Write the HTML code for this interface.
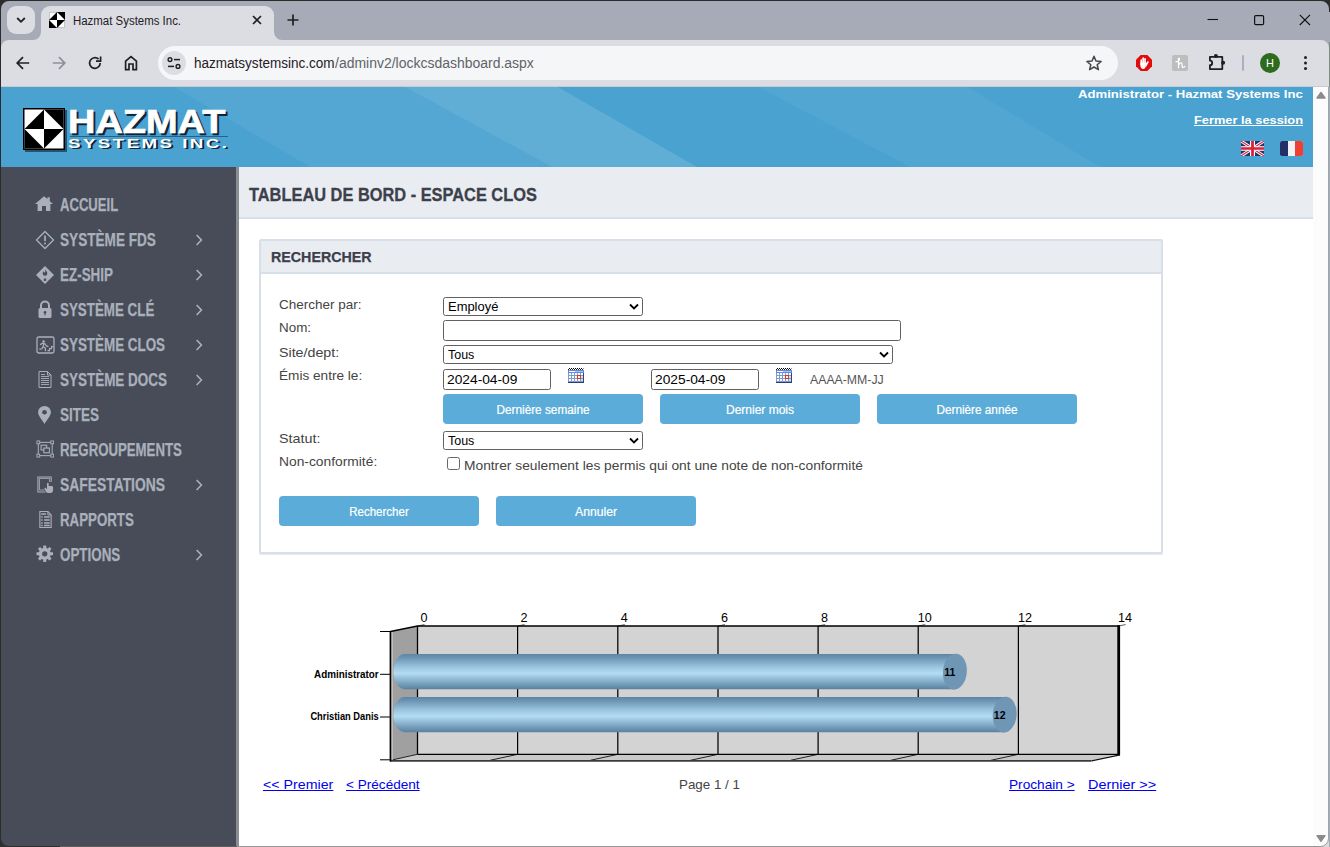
<!DOCTYPE html>
<html lang="fr">
<head>
<meta charset="utf-8">
<title>Hazmat Systems Inc.</title>
<style>
*{box-sizing:border-box;margin:0;padding:0}
html,body{width:1330px;height:847px;overflow:hidden;background:#fff;font-family:"Liberation Sans",sans-serif}
.abs{position:absolute}
#win{position:absolute;left:0;top:0;width:1330px;height:847px;overflow:hidden;background:#a7aab7}
.t{position:absolute;white-space:nowrap;transform-origin:0 50%;line-height:1}
/* ---------- browser chrome ---------- */
#tabstrip{position:absolute;left:0;top:0;width:1330px;height:40px;background:#a7aab7}
#toolbar{position:absolute;left:1px;top:40px;width:1328px;height:46px;background:#dcdde2;border-radius:8px 8px 0 0}
#tabsearch{position:absolute;left:7px;top:6px;width:28px;height:28px;border-radius:9px;background:#dcdde2}
#tab{position:absolute;left:41px;top:6px;width:233px;height:34px;background:#dcdde2;border-radius:9px 9px 0 0}
#urlbar{position:absolute;left:158px;top:46px;width:960px;height:34px;border-radius:17px;background:#f5f6f8}
#sitebtn{position:absolute;left:162px;top:51px;width:24px;height:24px;border-radius:12px;background:#dcdde2}
/* ---------- page ---------- */
#page{position:absolute;left:1px;top:87px;width:1327px;height:759px;background:#fff;overflow:hidden}
#hdr{position:absolute;left:0;top:0;width:1312px;height:80px;background:#4aa2d0;overflow:hidden}
#side{position:absolute;left:0;top:80px;width:235px;height:679px;background:#474c58}
#sideb{position:absolute;left:235px;top:80px;width:3px;height:679px;background:#8a8d94}
#titleband{position:absolute;left:238px;top:80px;width:1074px;height:52px;background:#e9edf2;border-bottom:2px solid #d9dfe8}
#panel{position:absolute;left:258px;top:152px;width:904px;height:315px;border:2px solid #d9dfe8;border-radius:2px;background:#fff;box-shadow:0 1px 0 #e6e9ef}
#panelh{position:absolute;left:0;top:0;width:900px;height:33px;background:#e9edf2;border-bottom:2px solid #d9dfe8}
#scroll{position:absolute;left:1312px;top:0;width:15px;height:759px;background:#fcfcfc}
.mi{position:absolute;left:0;width:235px;height:35px}
.mt{color:#aab0bb;font-weight:bold;font-size:18px;left:58.900px}
.lbl{color:#444;font-size:13px}
.btn{position:absolute;width:200px;height:30px;border-radius:4px;background:#5bacd8}
.btn span{position:absolute;white-space:nowrap;line-height:1;left:100px;top:9.700px;color:#fff;font-size:12px;-webkit-text-stroke:.2px #fff;transform-origin:50% 50%;transform:translateX(-50%)}
.sel{position:absolute;height:19px;border:1px solid #616161;border-radius:2.500px;background:#fff}
.inp{position:absolute;height:21px;border:1px solid #616161;border-radius:2.500px;background:#fff}
.lnk{color:#0000ee;text-decoration:underline;font-size:13px}
</style>
</head>
<body>
<div id="win">
  <div id="tabstrip"></div>
  <div id="toolbar"></div>
  <div id="tabsearch"></div>
  <div id="tab"></div>
  <div id="urlbar"></div>
  <div id="sitebtn"></div>

  <!-- tab search chevron -->
  <svg class="abs" style="left:15px;top:15px" width="12" height="10" viewBox="0 0 12 10"><path d="M2.2 3 6 6.8 9.8 3" fill="none" stroke="#1f2023" stroke-width="1.8"/></svg>
  <!-- tab curves -->
  <svg class="abs" style="left:33px;top:32px" width="8" height="8" viewBox="0 0 8 8"><path d="M0 8H8V0A8 8 0 0 1 0 8Z" fill="#dcdde2"/></svg>
  <svg class="abs" style="left:274px;top:32px" width="8" height="8" viewBox="0 0 8 8"><path d="M8 8H0V0A8 8 0 0 0 8 8Z" fill="#dcdde2"/></svg>
  <!-- favicon -->
  <svg class="abs" style="left:49px;top:12px" width="16" height="16" viewBox="0 0 16 16"><rect width="16" height="16" fill="#fff"/><rect x=".5" y=".5" width="15" height="15" fill="none" stroke="#c4c4c4" stroke-width="1"/><path d="M8 0H16V8Z M0 8V16H8Z M8 0V8H0Z M8 16V8H16Z" fill="#000"/></svg>
  <span class="t" id="tabtitle" style="left:73px;top:15px;font-size:12px;color:#1f2023;transform:scaleX(.953)">Hazmat Systems Inc.</span>
  <svg class="abs" style="left:251px;top:14px" width="12" height="12" viewBox="0 0 12 12"><path d="M2 2 10 10M10 2 2 10" stroke="#1f2023" stroke-width="1.6"/></svg>
  <svg class="abs" style="left:286px;top:13px" width="14" height="14" viewBox="0 0 14 14"><path d="M7 1.5V12.5M1.5 7H12.5" stroke="#1f2023" stroke-width="1.7"/></svg>
  <!-- window controls -->
  <svg class="abs" style="left:1207px;top:13px" width="12" height="12" viewBox="0 0 12 12"><path d="M0.5 6.5H11" stroke="#111" stroke-width="1.1"/></svg>
  <svg class="abs" style="left:1253px;top:14px" width="12" height="12" viewBox="0 0 12 12"><rect x="1.600" y="1.700" width="9" height="9" rx="1.200" fill="none" stroke="#111" stroke-width="1.200"/></svg>
  <svg class="abs" style="left:1299px;top:14px" width="12" height="12" viewBox="0 0 12 12"><path d="M0.8 0.8 11 11M11 0.8 0.8 11" stroke="#111" stroke-width="1.1"/></svg>
  <!-- nav icons -->
  <svg class="abs" style="left:15px;top:55px" width="16" height="16" viewBox="0 0 16 16"><path d="M14.2 8H2.6M8 2.2 2.2 8 8 13.8" fill="none" stroke="#1f2023" stroke-width="1.7"/></svg>
  <svg class="abs" style="left:51px;top:55px" width="16" height="16" viewBox="0 0 16 16"><path d="M1.8 8H13.4M8 2.2 13.8 8 8 13.8" fill="none" stroke="#8e9099" stroke-width="1.7"/></svg>
  <svg class="abs" style="left:87px;top:55px" width="16" height="16" viewBox="0 0 16 16"><path d="M13.2 8A5.3 5.3 0 1 1 11.6 4.2" fill="none" stroke="#1f2023" stroke-width="1.7"/><path d="M13.6 1.6V6.2H9" fill="none" stroke="#1f2023" stroke-width="1.7"/></svg>
  <svg class="abs" style="left:123px;top:54px" width="16" height="17" viewBox="0 0 16 17"><path d="M2.6 15.6V7.2L8 2.6 13.4 7.2V15.6H10V10H6V15.6Z" fill="none" stroke="#1f2023" stroke-width="1.7"/></svg>
  <!-- site settings icon -->
  <svg class="abs" style="left:166px;top:55px" width="16" height="16" viewBox="0 0 16 16"><circle cx="4" cy="4.6" r="1.9" fill="none" stroke="#1f2023" stroke-width="1.4"/><path d="M8 4.6H14" stroke="#1f2023" stroke-width="1.5"/><circle cx="12" cy="11.4" r="1.9" fill="none" stroke="#1f2023" stroke-width="1.4"/><path d="M2 11.4H8" stroke="#1f2023" stroke-width="1.5"/></svg>
  <span class="t" id="url1" style="left:194px;top:56px;font-size:14px;color:#1f2023;transform:scaleX(.966)">hazmatsystemsinc.com</span>
  <span class="t" id="url2" style="left:335px;top:56px;font-size:14px;color:#5f6368;transform:scaleX(.998)">/adminv2/lockcsdashboard.aspx</span>
  <!-- star -->
  <svg class="abs" style="left:1085px;top:54px" width="18" height="18" viewBox="0 0 18 18"><path d="M9 2.2 11 7l5.1.4-3.9 3.3 1.2 5L9 13l-4.4 2.7 1.2-5L1.9 7.400 7 7Z" fill="none" stroke="#45474d" stroke-width="1.5" stroke-linejoin="round"/></svg>
  <!-- adblock -->
  <svg class="abs" style="left:1135px;top:54px" width="18" height="18" viewBox="0 0 18 18"><path d="M5.700 1H12.300L17 5.700V12.300L12.300 17H5.700L1 12.300V5.700Z" fill="#e20b0b"/><g fill="#fff"><rect x="5.400" y="5.200" width="1.700" height="6" rx=".85"/><rect x="7.300" y="3.300" width="1.700" height="7" rx=".85"/><rect x="9.200" y="4" width="1.700" height="7" rx=".85"/><path d="M5.400 8.500H10.900V11.500C10.900 13.600 9.700 14.900 8.200 14.900 6.600 14.900 5.400 13.600 5.400 11.500Z"/><path d="M10.400 10.300 12.300 7.500a.8.800 0 0 1 1.350.85L11.300 12.800Z"/></g></svg>
  <!-- grey ext -->
  <svg class="abs" style="left:1172px;top:55px" width="16" height="16" viewBox="0 0 16 16"><rect width="16" height="16" rx="2" fill="#bdbdbd"/><path d="M4 6.700C5.600 6.700 7.700 5.700 7.500 3.700 7.300 2.600 6.200 3 6.400 5L6.600 12.800M6.700 9.800C7.400 7.600 9.800 7 10 9L10.200 11.500C10.300 12.800 11.600 12.800 12.700 11.300" fill="none" stroke="#fff" stroke-width="1.250" stroke-linecap="round" stroke-linejoin="round"/></svg>
  <!-- puzzle -->
  <svg class="abs" style="left:1207px;top:53px" width="20" height="20" viewBox="0 0 20 20"><path d="M2.900 3.900H15.300V16.100H2.900V12.200A2.300 2.300 0 0 0 2.900 7.600Z" fill="none" stroke="#1f2023" stroke-width="1.800" stroke-linejoin="round"/><circle cx="8.900" cy="3.100" r="2" fill="#1f2023"/><circle cx="16.100" cy="9.800" r="2" fill="#1f2023"/></svg>
  <div class="abs" style="left:1242px;top:55px;width:2px;height:16px;border-radius:1px;background:#a9b0c3"></div>
  <div class="abs" style="left:1260px;top:53px;width:20px;height:20px;border-radius:10px;background:#2d6b1f"></div>
  <span class="t" style="left:1266px;top:58px;font-size:11px;color:#fff">H</span>
  <div class="abs" style="left:1304.400px;top:56px;width:3px;height:3px;border-radius:2px;background:#1f2023;box-shadow:0 5.500px 0 #1f2023,0 11px 0 #1f2023"></div>
  <div class="abs" style="left:1px;top:86px;width:1328px;height:1px;background:#c9cacf"></div>

  <div id="page">
    <div id="hdr">
      <svg class="abs" style="left:0;top:0" width="1312" height="80" viewBox="0 0 1312 80">
        <polygon points="173,0 404,0 551,80 309,80" fill="#fff" fill-opacity=".055"/>
        <polygon points="404,0 557,0 696,80 551,80" fill="#fff" fill-opacity=".12"/>
        <polygon points="757,0 967,0 1099,80 909,80" fill="#fff" fill-opacity=".045"/>
      </svg>
      <!-- logo -->
      <svg class="abs" style="left:20px;top:19px" width="50" height="50" viewBox="0 0 50 50">
        <rect x="4" y="4" width="42" height="42" fill="#0b1220" fill-opacity=".55"/>
        <rect x="2" y="2" width="42" height="42" fill="#000"/>
        <g transform="translate(3.500 3.500)">
          <rect width="39" height="39" fill="#fff"/>
          <path d="M19.500 0H39V19.500Z M0 19.500V39H19.500Z M19.500 0V19.500H0Z M19.500 39V19.500H39Z" fill="#000"/>
        </g>
      </svg>
      <span class="t" id="lg1s" style="left:69px;top:20px;font-size:33px;font-weight:bold;color:#0e2238;-webkit-text-stroke:.7px #0e2238;transform:scaleX(1.15)">HAZMAT</span>
      <span class="t" id="lg1" style="left:67px;top:18px;font-size:33px;font-weight:bold;color:#fff;-webkit-text-stroke:.7px #fff;transform:scaleX(1.15)">HAZMAT</span>
      <div class="abs" style="left:69px;top:49px;width:158px;height:1px;background:#2c5f86"></div>
      <span class="t" id="lg2s" style="left:68.600px;top:52px;font-size:12px;font-weight:bold;color:#0e2238;letter-spacing:1.54px;transform:scaleX(1.564)">SYSTEMS INC.</span>
      <span class="t" id="lg2" style="left:67.100px;top:50.500px;font-size:12px;font-weight:bold;color:#fff;letter-spacing:1.54px;transform:scaleX(1.564)">SYSTEMS INC.</span>
      <!-- right -->
      <span class="t" id="h1" style="left:1077px;top:1.500px;font-size:11.500px;font-weight:bold;color:#fff;transform:scaleX(1.142)">Administrator - Hazmat Systems Inc</span>
      <span class="t" id="h2" style="left:1193px;top:27.500px;font-size:11.500px;font-weight:bold;color:#fff;transform:scaleX(1.1146)">Fermer la session</span>
      <div class="abs" style="left:1193px;top:38px;width:109px;height:1px;background:#fff"></div>
      <!-- UK flag -->
      <svg class="abs" style="left:1240px;top:54px" width="23" height="15" viewBox="0 0 23 16" preserveAspectRatio="none">
        <rect width="23" height="16" rx="1.5" fill="#27346b"/>
        <path d="M0 0 23 16M23 0 0 16" stroke="#fff" stroke-width="3.200"/>
        <path d="M0 0 23 16M23 0 0 16" stroke="#d8243a" stroke-width="1.100"/>
        <path d="M11.500 0V16M0 8H23" stroke="#fff" stroke-width="5"/>
        <path d="M11.500 0V16M0 8H23" stroke="#d8243a" stroke-width="2.800"/>
      </svg>
      <!-- FR flag -->
      <svg class="abs" style="left:1279px;top:54px" width="23" height="15" viewBox="0 0 23 16" preserveAspectRatio="none">
        <rect width="23" height="16" rx="2" fill="#f3f3f6"/>
        <path d="M2 0H8V16H2a2 2 0 0 1-2-2V2a2 2 0 0 1 2-2Z" fill="#232f68"/>
        <path d="M15 0H21a2 2 0 0 1 2 2V14a2 2 0 0 1-2 2H15Z" fill="#ee4033"/>
      </svg>
    </div>
    <div id="side">
      <div class="mi" style="top:20px"><svg class="abs" style="left:33.300px;top:8.300px" width="20" height="17" viewBox="0 0 20 17"><path d="M10 1.200 1 9h2.600V16H8V11h4v5h4.400V9H19L15.800 6.200V2.200H13.400V4.100Z" fill="#aab0bb"/></svg><span class="t mt" id="m0" style="top:9.200px;-webkit-text-stroke:.25px #aab0bb;transform:scaleX(0.7275)">ACCUEIL</span></div>
      <div class="mi" style="top:55px"><svg class="abs" style="left:34px;top:8px" width="20" height="20" viewBox="0 0 20 20"><path d="M10 1.500 18.500 10 10 18.500 1.500 10Z" fill="none" stroke="#aab0bb" stroke-width="1.300"/><path d="M10 5.500V11.200" stroke="#aab0bb" stroke-width="1.700"/><circle cx="10" cy="13.600" r="1" fill="#aab0bb"/></svg><span class="t mt" id="m1" style="top:9.200px;-webkit-text-stroke:.25px #aab0bb;transform:scaleX(0.755)">SYSTÈME FDS</span><svg class="abs" style="left:194px;top:12px" width="8" height="12" viewBox="0 0 8 12"><path d="M1.600 1 6.400 6 1.600 11" fill="none" stroke="#aab0bb" stroke-width="1.600"/></svg></div>
      <div class="mi" style="top:90px"><svg class="abs" style="left:34px;top:8px" width="20" height="20" viewBox="0 0 20 20"><path d="M10 1 19 10 10 19 1 10Z" fill="#aab0bb"/><path d="M10 4.500c1.500 1.500 2.300 2.600 2.300 4a2.300 2.300 0 0 1-4.600 0c0-1 .5-1.700 1.100-2.300.1.900.5 1.300 1 1.300.6 0 .7-1 .2-3Z" fill="#474c58"/><rect x="8.800" y="13.500" width="2.400" height="2.400" fill="#474c58"/></svg><span class="t mt" id="m2" style="top:9.200px;-webkit-text-stroke:.25px #aab0bb;transform:scaleX(0.746)">EZ-SHIP</span><svg class="abs" style="left:194px;top:12px" width="8" height="12" viewBox="0 0 8 12"><path d="M1.600 1 6.400 6 1.600 11" fill="none" stroke="#aab0bb" stroke-width="1.600"/></svg></div>
      <div class="mi" style="top:125px"><svg class="abs" style="left:36px;top:8px" width="16" height="19" viewBox="0 0 16 19"><path d="M4 8V5.500a4 4 0 0 1 8 0V8" fill="none" stroke="#aab0bb" stroke-width="2"/><rect x="1.500" y="8" width="13" height="10" rx="1.500" fill="#aab0bb"/><circle cx="8" cy="12.200" r="1.300" fill="#474c58"/><rect x="7.400" y="12.500" width="1.200" height="2.800" fill="#474c58"/></svg><span class="t mt" id="m3" style="top:9.200px;-webkit-text-stroke:.25px #aab0bb;transform:scaleX(0.7425)">SYSTÈME CLÉ</span><svg class="abs" style="left:194px;top:12px" width="8" height="12" viewBox="0 0 8 12"><path d="M1.600 1 6.400 6 1.600 11" fill="none" stroke="#aab0bb" stroke-width="1.600"/></svg></div>
      <div class="mi" style="top:160px"><svg class="abs" style="left:35px;top:8.500px" width="19" height="18" viewBox="0 0 19 18"><rect x="1" y="1" width="17" height="16" rx="1.800" fill="none" stroke="#aab0bb" stroke-width="1.300"/><circle cx="7.600" cy="5.400" r="1.250" fill="#aab0bb"/><path d="M4.600 8.400 6.600 7.200 9 7.800l1.200 2 1.800.5M8 7.600 7 10.600l2.200 1.500.3 2.600M7 10.800 5.800 12.800 3.800 13.200" fill="none" stroke="#aab0bb" stroke-width="1.250" stroke-linecap="round" stroke-linejoin="round"/><path d="M11.500 14.600H13.500V12.600H15.500V10.600H17.200" fill="none" stroke="#aab0bb" stroke-width="1.100"/></svg><span class="t mt" id="m4" style="top:9.200px;-webkit-text-stroke:.25px #aab0bb;transform:scaleX(0.745)">SYSTÈME CLOS</span><svg class="abs" style="left:194px;top:12px" width="8" height="12" viewBox="0 0 8 12"><path d="M1.600 1 6.400 6 1.600 11" fill="none" stroke="#aab0bb" stroke-width="1.600"/></svg></div>
      <div class="mi" style="top:195px"><svg class="abs" style="left:36px;top:8px" width="16" height="19" viewBox="0 0 16 19"><path d="M2 1.500H10.500L14 5V17.500H2Z" fill="none" stroke="#aab0bb" stroke-width="1"/><path d="M10.500 1.500V5H14" fill="none" stroke="#aab0bb" stroke-width="1"/><path d="M4 6.500H12M4 8.500H12M4 10.500H12M4 12.500H12M4 14.500H12M4 4.500H8" stroke="#aab0bb" stroke-width=".9"/></svg><span class="t mt" id="m5" style="top:9.200px;-webkit-text-stroke:.25px #aab0bb;transform:scaleX(0.748)">SYSTÈME DOCS</span><svg class="abs" style="left:194px;top:12px" width="8" height="12" viewBox="0 0 8 12"><path d="M1.600 1 6.400 6 1.600 11" fill="none" stroke="#aab0bb" stroke-width="1.600"/></svg></div>
      <div class="mi" style="top:230px"><svg class="abs" style="left:36.200px;top:7.800px" width="15" height="20.500" viewBox="0 0 14 20" preserveAspectRatio="none"><path d="M7 1a6 6 0 0 0-6 6c0 3.600 4 7.600 6 11.500 2-3.900 6-7.900 6-11.500a6 6 0 0 0-6-6Z" fill="#aab0bb"/><circle cx="7" cy="7" r="2.200" fill="#474c58"/></svg><span class="t mt" id="m6" style="top:9.200px;-webkit-text-stroke:.25px #aab0bb;transform:scaleX(0.75)">SITES</span></div>
      <div class="mi" style="top:265px"><svg class="abs" style="left:34.500px;top:8.300px" width="18.500" height="18" viewBox="0 0 20 19" preserveAspectRatio="none"><rect x="2.500" y="2.500" width="15" height="14" fill="none" stroke="#aab0bb" stroke-width="1.100"/><g fill="#474c58" stroke="#aab0bb" stroke-width="1"><rect x="1" y="1" width="3" height="3"/><rect x="16" y="1" width="3" height="3"/><rect x="1" y="15" width="3" height="3"/><rect x="16" y="15" width="3" height="3"/></g><rect x="5.500" y="5.500" width="6" height="5" fill="none" stroke="#aab0bb" stroke-width="1.200"/><rect x="8.500" y="8.500" width="6" height="5" fill="#474c58" stroke="#aab0bb" stroke-width="1.200"/></svg><span class="t mt" id="m7" style="top:9.200px;-webkit-text-stroke:.25px #aab0bb;transform:scaleX(0.734)">REGROUPEMENTS</span></div>
      <div class="mi" style="top:300px"><svg class="abs" style="left:35px;top:8px" width="18" height="19" viewBox="0 0 19 19" preserveAspectRatio="none"><path d="M16 7V2H2V17H10" fill="none" stroke="#aab0bb" stroke-width="1.100"/><path d="M3.600 3.400H14.400V7M3.600 3.400V15H9" fill="none" stroke="#aab0bb" stroke-width=".9"/><path d="M11.600 8.600a.9.900 0 0 1 1.800 0V11h3.200a1.400 1.400 0 0 1 1.400 1.400V15a3 3 0 0 1-3 3H13a3 3 0 0 1-2.600-1.500L9 13.800c-.4-.8.600-1.500 1.300-.8l1.300 1.200Z" fill="#aab0bb"/></svg><span class="t mt" id="m8" style="top:9.200px;-webkit-text-stroke:.25px #aab0bb;transform:scaleX(0.77)">SAFESTATIONS</span><svg class="abs" style="left:194px;top:12px" width="8" height="12" viewBox="0 0 8 12"><path d="M1.600 1 6.400 6 1.600 11" fill="none" stroke="#aab0bb" stroke-width="1.600"/></svg></div>
      <div class="mi" style="top:335px"><svg class="abs" style="left:37px;top:8px" width="15" height="19" viewBox="0 0 16 19" preserveAspectRatio="none"><path d="M2 1.500H10.500L14 5V17.500H2Z" fill="none" stroke="#aab0bb" stroke-width="1.200"/><path d="M10.500 1.500V5H14" fill="none" stroke="#aab0bb" stroke-width="1"/><path d="M3.500 7H5M6.500 7H12.500M3.500 10H5M6.500 10H12.500M3.500 13H5M6.500 13H12.500M3.500 15.500H5M6.500 15.500H12.500M3.500 4H8.500" stroke="#aab0bb" stroke-width="1.400"/></svg><span class="t mt" id="m9" style="top:9.200px;-webkit-text-stroke:.25px #aab0bb;transform:scaleX(0.738)">RAPPORTS</span></div>
      <div class="mi" style="top:370px"><svg class="abs" style="left:34.500px;top:8px" width="17.500" height="17.500" viewBox="0 0 18 18"><g fill="#aab0bb"><circle cx="9" cy="9" r="6.200"/><rect x="7.400" y=".5" width="3.200" height="17" rx=".5" transform="rotate(0 9 9)"/><rect x="7.400" y=".5" width="3.200" height="17" rx=".5" transform="rotate(45 9 9)"/><rect x="7.400" y=".5" width="3.200" height="17" rx=".5" transform="rotate(90 9 9)"/><rect x="7.400" y=".5" width="3.200" height="17" rx=".5" transform="rotate(135 9 9)"/></g><circle cx="9" cy="9" r="2.700" fill="#474c58"/></svg><span class="t mt" id="m10" style="top:9.200px;-webkit-text-stroke:.25px #aab0bb;transform:scaleX(0.744)">OPTIONS</span><svg class="abs" style="left:194px;top:12px" width="8" height="12" viewBox="0 0 8 12"><path d="M1.600 1 6.400 6 1.600 11" fill="none" stroke="#aab0bb" stroke-width="1.600"/></svg></div>
    </div>
    <div id="sideb"></div>
    <div id="titleband"></div>
    <span class="t" id="ttl" style="left:247.500px;top:100px;font-size:17.500px;font-weight:bold;color:#3d3f4b;-webkit-text-stroke:.3px #3d3f4b;transform:scaleX(0.936)">TABLEAU DE BORD - ESPACE CLOS</span>
    <div id="panel"><div id="panelh"></div></div>
    <span class="t" id="ptl" style="left:269.500px;top:162px;font-size:15px;font-weight:bold;color:#3d3f4b;-webkit-text-stroke:.25px #3d3f4b;transform:scaleX(0.951)">RECHERCHER</span>
    <!-- form labels -->
    <span class="t lbl" id="l1" style="left:278px;top:211px;transform:scaleX(1.038)">Chercher par:</span>
    <span class="t lbl" id="l2" style="left:278px;top:234px;transform:scaleX(1.032)">Nom:</span>
    <span class="t lbl" id="l3" style="left:278px;top:259px;transform:scaleX(1.095)">Site/dept:</span>
    <span class="t lbl" id="l4" style="left:278px;top:282px;transform:scaleX(1.047)">Émis entre le:</span>
    <span class="t lbl" id="l5" style="left:278px;top:345px;transform:scaleX(1.104)">Statut:</span>
    <span class="t lbl" id="l6" style="left:278px;top:368px;transform:scaleX(1.062)">Non-conformité:</span>
    <!-- controls -->
    <div class="sel" style="left:442px;top:210px;width:200px"></div>
    <span class="t" id="s1" style="left:447px;top:213px;font-size:13px;color:#000;transform:scaleX(0.996)">Employé</span>
    <svg class="abs chev" style="left:627.800px;top:216px" width="10" height="8" viewBox="0 0 10 8"><path d="M1 1.500 5 5.500 9 1.500" fill="none" stroke="#000" stroke-width="1.800"/></svg>
    <div class="inp" style="left:442px;top:233px;width:458px"></div>
    <div class="sel" style="left:442px;top:258px;width:450px"></div>
    <span class="t" id="s2" style="left:447px;top:261px;font-size:13px;color:#000;transform:scaleX(0.96)">Tous</span>
    <svg class="abs chev" style="left:877.800px;top:264px" width="10" height="8" viewBox="0 0 10 8"><path d="M1 1.500 5 5.500 9 1.500" fill="none" stroke="#000" stroke-width="1.800"/></svg>
    <div class="inp" style="left:442px;top:282px;width:108px"></div>
    <span class="t" id="d1" style="left:446px;top:286px;font-size:13px;color:#000;transform:scaleX(1.059)">2024-04-09</span>
    <div class="inp" style="left:650px;top:282px;width:108px"></div>
    <span class="t" id="d2" style="left:654px;top:286px;font-size:13px;color:#000;transform:scaleX(1.059)">2025-04-09</span>
    <svg class="abs" style="left:567px;top:281px" width="16" height="15" viewBox="0 0 16 15" shape-rendering="crispEdges"><rect x="1" y="0" width="1" height="1" fill="#000"/><rect x="0" y="1" width="1" height="1" fill="#222"/><rect x="3" y="0" width="1" height="1" fill="#000"/><rect x="2" y="1" width="1" height="1" fill="#222"/><rect x="5" y="0" width="1" height="1" fill="#000"/><rect x="4" y="1" width="1" height="1" fill="#222"/><rect x="7" y="0" width="1" height="1" fill="#000"/><rect x="6" y="1" width="1" height="1" fill="#222"/><rect x="9" y="0" width="1" height="1" fill="#000"/><rect x="8" y="1" width="1" height="1" fill="#222"/><rect x="11" y="0" width="1" height="1" fill="#000"/><rect x="10" y="1" width="1" height="1" fill="#222"/><rect x="13" y="0" width="1" height="1" fill="#000"/><rect x="12" y="1" width="1" height="1" fill="#222"/><rect x="14" y="1" width="1" height="1" fill="#222"/><rect x="15" y="0" width="1" height="1" fill="#999"/><rect x="0" y="2" width="16" height="3" fill="#5c88e2"/><rect x="1" y="3" width="6" height="1" fill="#fff"/><rect x="7" y="3" width="8" height="1" fill="#a9c2f2"/><rect x="0" y="5" width="16" height="10" fill="#7f9acb"/><rect x="15" y="5" width="1" height="10" fill="#2c467c"/><rect x="0" y="14" width="16" height="1" fill="#27406f"/><rect x="1" y="5" width="2" height="2" fill="#fff"/><rect x="4" y="5" width="2" height="2" fill="#fff"/><rect x="7" y="5" width="2" height="2" fill="#fff"/><rect x="10" y="5" width="2" height="2" fill="#fff"/><rect x="13" y="5" width="2" height="2" fill="#fff"/><rect x="1" y="8" width="2" height="2" fill="#fff"/><rect x="4" y="8" width="2" height="2" fill="#fff"/><rect x="7" y="8" width="2" height="2" fill="#fff"/><rect x="10" y="8" width="2" height="2" fill="#eef6ff"/><rect x="13" y="8" width="2" height="2" fill="#d4e2f4"/><rect x="1" y="11" width="2" height="2" fill="#fff"/><rect x="4" y="11" width="2" height="2" fill="#fff"/><rect x="7" y="11" width="2" height="2" fill="#fff"/><rect x="10" y="11" width="2" height="2" fill="#eef6ff"/><rect x="13" y="11" width="2" height="2" fill="#d4e2f4"/><rect x="9" y="7" width="4" height="4" fill="#e8380d"/><rect x="10" y="8" width="2" height="2" fill="#fff"/></svg>
    <svg class="abs" style="left:775px;top:281px" width="16" height="15" viewBox="0 0 16 15" shape-rendering="crispEdges"><rect x="1" y="0" width="1" height="1" fill="#000"/><rect x="0" y="1" width="1" height="1" fill="#222"/><rect x="3" y="0" width="1" height="1" fill="#000"/><rect x="2" y="1" width="1" height="1" fill="#222"/><rect x="5" y="0" width="1" height="1" fill="#000"/><rect x="4" y="1" width="1" height="1" fill="#222"/><rect x="7" y="0" width="1" height="1" fill="#000"/><rect x="6" y="1" width="1" height="1" fill="#222"/><rect x="9" y="0" width="1" height="1" fill="#000"/><rect x="8" y="1" width="1" height="1" fill="#222"/><rect x="11" y="0" width="1" height="1" fill="#000"/><rect x="10" y="1" width="1" height="1" fill="#222"/><rect x="13" y="0" width="1" height="1" fill="#000"/><rect x="12" y="1" width="1" height="1" fill="#222"/><rect x="14" y="1" width="1" height="1" fill="#222"/><rect x="15" y="0" width="1" height="1" fill="#999"/><rect x="0" y="2" width="16" height="3" fill="#5c88e2"/><rect x="1" y="3" width="6" height="1" fill="#fff"/><rect x="7" y="3" width="8" height="1" fill="#a9c2f2"/><rect x="0" y="5" width="16" height="10" fill="#7f9acb"/><rect x="15" y="5" width="1" height="10" fill="#2c467c"/><rect x="0" y="14" width="16" height="1" fill="#27406f"/><rect x="1" y="5" width="2" height="2" fill="#fff"/><rect x="4" y="5" width="2" height="2" fill="#fff"/><rect x="7" y="5" width="2" height="2" fill="#fff"/><rect x="10" y="5" width="2" height="2" fill="#fff"/><rect x="13" y="5" width="2" height="2" fill="#fff"/><rect x="1" y="8" width="2" height="2" fill="#fff"/><rect x="4" y="8" width="2" height="2" fill="#fff"/><rect x="7" y="8" width="2" height="2" fill="#fff"/><rect x="10" y="8" width="2" height="2" fill="#eef6ff"/><rect x="13" y="8" width="2" height="2" fill="#d4e2f4"/><rect x="1" y="11" width="2" height="2" fill="#fff"/><rect x="4" y="11" width="2" height="2" fill="#fff"/><rect x="7" y="11" width="2" height="2" fill="#fff"/><rect x="10" y="11" width="2" height="2" fill="#eef6ff"/><rect x="13" y="11" width="2" height="2" fill="#d4e2f4"/><rect x="9" y="7" width="4" height="4" fill="#e8380d"/><rect x="10" y="8" width="2" height="2" fill="#fff"/></svg>
    <span class="t" id="fmt" style="left:808.500px;top:286.500px;font-size:12.500px;color:#555;transform:scaleX(0.983)">AAAA-MM-JJ</span>
    <div class="btn" style="left:442px;top:307px"><span class="bt" id="b1" style="transform:translateX(-50%) scaleX(0.983)">Dernière semaine</span></div>
    <div class="btn" style="left:659px;top:307px"><span class="bt" id="b2">Dernier mois</span></div>
    <div class="btn" style="left:876px;top:307px"><span class="bt" id="b3" style="transform:translateX(-50%) scaleX(0.98)">Dernière année</span></div>
    <div class="sel" style="left:442px;top:344px;width:200px"></div>
    <span class="t" id="s3" style="left:447px;top:347px;font-size:13px;color:#000;transform:scaleX(0.96)">Tous</span>
    <svg class="abs chev" style="left:627.800px;top:350px" width="10" height="8" viewBox="0 0 10 8"><path d="M1 1.500 5 5.500 9 1.500" fill="none" stroke="#000" stroke-width="1.800"/></svg>
    <div class="abs" style="left:446px;top:370px;width:13px;height:13px;border:1px solid #666;border-radius:2.500px;background:#fff"></div>
    <span class="t lbl" id="cb" style="left:462.500px;top:372px;transform:scaleX(1.0595)">Montrer seulement les permis qui ont une note de non-conformité</span>
    <div class="btn" style="left:278px;top:409px"><span class="bt" id="b4" style="transform:translateX(-50%) scaleX(0.96)">Rechercher</span></div>
    <div class="btn" style="left:495px;top:409px"><span class="bt" id="b5" style="transform:translateX(-50%) scaleX(1.014)">Annuler</span></div>

    <svg class="abs" style="left:-1px;top:-87px" width="1330" height="847" viewBox="0 0 1330 847" font-family="Liberation Sans, sans-serif">
      <defs>
        <linearGradient id="bg" x1="0" y1="0" x2="0" y2="1">
          <stop offset="0" stop-color="#5d84a4"/><stop offset=".12" stop-color="#6d97b6"/><stop offset=".38" stop-color="#9cc6e0"/><stop offset=".55" stop-color="#b4dbf3"/><stop offset=".75" stop-color="#8ab3cf"/><stop offset=".92" stop-color="#6890af"/><stop offset="1" stop-color="#5a81a1"/>
        </linearGradient>
      </defs>
      <rect x="417.500" y="626" width="701" height="128.300" fill="#d3d3d3"/>
      <polygon points="390.500,631.500 417.500,626 417.500,754.300 390.500,760.300" fill="#a0a0a0"/>
      <polygon points="417.500,754.300 1118.500,754.300 1091,760.300 390.500,760.300" fill="#c9c9c9"/>
      <path d="M517.6 626V754" stroke="#000" stroke-width="1.250"/><path d="M617.8 626V754" stroke="#000" stroke-width="1.250"/><path d="M718.0 626V754" stroke="#000" stroke-width="1.250"/><path d="M818.1 626V754" stroke="#000" stroke-width="1.250"/><path d="M918.2 626V754" stroke="#000" stroke-width="1.250"/><path d="M1018.4 626V754" stroke="#000" stroke-width="1.250"/><path d="M517.6 754.300 490.1 760.300" stroke="#222" stroke-width="1"/><path d="M617.8 754.300 590.3 760.300" stroke="#222" stroke-width="1"/><path d="M718.0 754.300 690.5 760.300" stroke="#222" stroke-width="1"/><path d="M818.1 754.300 790.6 760.300" stroke="#222" stroke-width="1"/><path d="M918.2 754.300 890.8 760.300" stroke="#222" stroke-width="1"/><path d="M1018.4 754.300 990.9 760.300" stroke="#222" stroke-width="1"/><path d="M417.5 626 424.5 624.600" stroke="#333" stroke-width=".8"/><path d="M517.6 626 524.6 624.600" stroke="#333" stroke-width=".8"/><path d="M617.8 626 624.8 624.600" stroke="#333" stroke-width=".8"/><path d="M718.0 626 725.0 624.600" stroke="#333" stroke-width=".8"/><path d="M818.1 626 825.1 624.600" stroke="#333" stroke-width=".8"/><path d="M918.2 626 925.2 624.600" stroke="#333" stroke-width=".8"/><path d="M1018.4 626 1025.4 624.600" stroke="#333" stroke-width=".8"/><path d="M1118.6 626 1125.6 624.600" stroke="#333" stroke-width=".8"/>
      <path d="M417.500 626V754.300" stroke="#000" stroke-width="1.300"/>
      <path d="M390.500 631.500 417.500 626H1119.500" fill="none" stroke="#000" stroke-width="1.500"/>
      <path d="M417.500 754.300H1118" stroke="#000" stroke-width="1.200"/>
      <path d="M417.500 754.300 390.500 760.300" stroke="#222" stroke-width="1"/>
      <path d="M1118.700 625.300V755.300" stroke="#000" stroke-width="2.800"/>
      <path d="M1120 754.800 1091.500 760.800" stroke="#111" stroke-width="1.300"/>
      <path d="M390 760.900H1091.500" stroke="#3a3a3a" stroke-width="1.800"/>
      <path d="M390.400 631V761.500" stroke="#000" stroke-width="1.600"/>
      <path d="M392.300 632V760" stroke="#c8c8c8" stroke-width="1"/>
      <path d="M380 631.500H390M380 759.800H390M380 674.300H390M380 717H390" stroke="#000" stroke-width="1"/>
      <!-- bars -->
      <path d="M404.700 654H955V689.200H404.700A11.300 17.600 0 0 1 404.700 654Z" fill="url(#bg)"/>
      <ellipse cx="954.900" cy="671.700" rx="11.900" ry="17.900" fill="#6f96b4" transform="rotate(5 954.900 671.700)"/>
      <path d="M404.700 697H1004.700V732.200H404.700A11.300 17.600 0 0 1 404.700 697Z" fill="url(#bg)"/>
      <ellipse cx="1004.700" cy="714.700" rx="11.900" ry="17.900" fill="#6f96b4" transform="rotate(5 1004.700 714.700)"/>
      <text x="949.900" y="676.100" font-size="10.500" font-weight="bold" text-anchor="middle" fill="#000">11</text>
      <text x="999.700" y="719.100" font-size="10.500" font-weight="bold" text-anchor="middle" fill="#000">12</text>
      <text x="424.0" y="621.600" font-size="12.600" text-anchor="middle" fill="#000">0</text><text x="524.1" y="621.600" font-size="12.600" text-anchor="middle" fill="#000">2</text><text x="624.3" y="621.600" font-size="12.600" text-anchor="middle" fill="#000">4</text><text x="724.5" y="621.600" font-size="12.600" text-anchor="middle" fill="#000">6</text><text x="824.6" y="621.600" font-size="12.600" text-anchor="middle" fill="#000">8</text><text x="924.7" y="621.600" font-size="12.600" text-anchor="middle" fill="#000">10</text><text x="1024.9" y="621.600" font-size="12.600" text-anchor="middle" fill="#000">12</text><text x="1125.1" y="621.600" font-size="12.600" text-anchor="middle" fill="#000">14</text>
      <text x="378.700" y="677.800" font-size="10.300" font-weight="bold" text-anchor="end" fill="#000" textLength="64.700" lengthAdjust="spacingAndGlyphs">Administrator</text>
      <text x="378.700" y="719.500" font-size="10.300" font-weight="bold" text-anchor="end" fill="#000" textLength="68.300" lengthAdjust="spacingAndGlyphs">Christian Danis</text>
    </svg>
    <!-- pagination -->
    <span class="t lnk" id="p1" style="left:261.500px;top:691px;transform:scaleX(1.094)">&lt;&lt; Premier</span>
    <span class="t lnk" id="p2" style="left:344.500px;top:691px;transform:scaleX(1.045)">&lt; Précédent</span>
    <span class="t lbl" id="p3" style="left:677.500px;top:691px;transform:scaleX(1.029)">Page 1 / 1</span>
    <span class="t lnk" id="p4" style="left:1008px;top:691px;transform:scaleX(1.05)">Prochain &gt;</span>
    <span class="t lnk" id="p5" style="left:1087px;top:691px;transform:scaleX(1.11)">Dernier &gt;&gt;</span>
    <div id="scroll"><svg class="abs" style="left:0;top:0" width="15" height="759" viewBox="0 0 15 759"><path d="M4 11 8 5.400 12 11Z" fill="#8b8b8b" stroke="#8b8b8b" stroke-width="1.400" stroke-linejoin="round"/><path d="M4 748.700 8 754.300 12 748.700Z" fill="#8b8b8b" stroke="#8b8b8b" stroke-width="1.400" stroke-linejoin="round"/></svg></div>
  </div>
  <!-- window corner masks -->
  <svg class="abs" style="left:0;top:0" width="1330" height="847" viewBox="0 0 1330 847">
    <path d="M0 0H1330V12H1329V9a8 8 0 0 0-8-8H9a8 8 0 0 0-8 8V847H0Z" fill="#2b2b2b"/>
    <path d="M0 847V836H1V838a8 8 0 0 0 8 8H60V847Z" fill="#2f2f2f"/>
    <rect x="60" y="846" width="177" height="1" fill="#5e5e5e"/><rect x="237" y="846" width="1084" height="1" fill="#989898"/>
    <rect x="1328" y="87" width="1" height="752" fill="#a3a3a3"/>
    <rect x="1329" y="12" width="1" height="30" fill="#a7aab7"/><rect x="1329" y="42" width="1" height="45" fill="#7f8c80"/><rect x="1329" y="87" width="1" height="752" fill="#9fb0c2"/>
    <path d="M1329 838V847H1320a8 8 0 0 0 8-8Z" fill="#dcdcdc"/><path d="M1328.500 838.500a8 8 0 0 1-8 8" fill="none" stroke="#9c9c9c" stroke-width="1"/>
  </svg>
</div>
</body>
</html>
